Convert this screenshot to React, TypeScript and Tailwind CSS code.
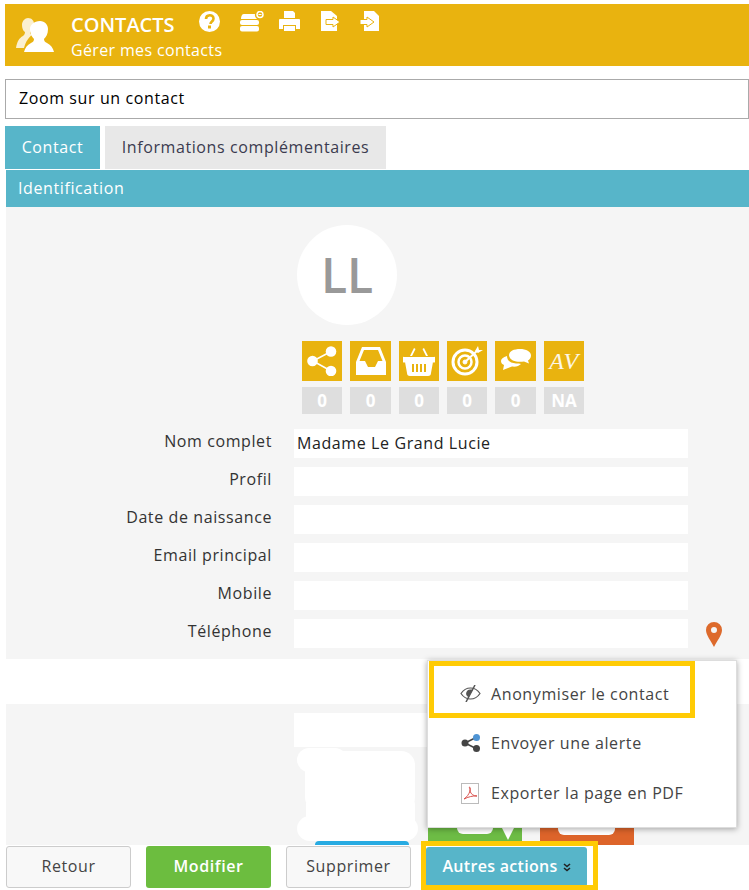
import React from "react";

const font = { fontFamily: '"Open Sans", sans-serif' };

function People() {
  return (
    <svg width="38" height="36" viewBox="0 0 38 36" fill="#fff">
      <path opacity=".8" d="M12 1c4 0 6 3 6 6 0 4-2 7-4 8 0 2 1 2 2 3-3 2-6 6-8 13H0c1-6 3-10 7-12 1-1 2-2 2-4-2-1-3-4-3-7 0-4 3-7 6-7z" />
      <path d="M24 4c5 0 8 4 8 8 0 5-2 8-4 10 0 2 1 3 3 4 4 2 6 5 7 9H8c1-4 3-7 7-9 2-1 3-2 3-4-2-2-4-5-4-10 0-4 4-8 10-8z" />
    </svg>
  );
}

function HeaderIcons() {
  return (
    <div className="flex items-start">
      <svg width="21" height="21" viewBox="0 0 21 21">
        <circle cx="10.5" cy="10.5" r="10.5" fill="#fff" />
        <path d="M7 8c0-5 7.500-5 7.500-.5 0 3-3 3-3 5.500" fill="none" stroke="#e9b30f" strokeWidth="2.600" />
        <rect x="9" y="14.500" width="3" height="3" fill="#e9b30f" />
      </svg>
      <svg className="ml-[20px]" width="24" height="21" viewBox="0 0 24 21" fill="#fff">
        <rect x="0" y="15" width="19" height="5.500" rx="2" />
        <rect x="0" y="9" width="19" height="5" rx="2" />
        <path d="M4 3h11a5 5 0 0 0 2 5H1c0-3 1-5 3-5z" />
        <circle cx="20" cy="3.500" r="3" fill="none" stroke="#fff" strokeWidth="1.500" />
        <rect x="18.500" y="3" width="3" height="1" />
      </svg>
      <svg className="ml-[15px]" width="21" height="21" viewBox="0 0 21 21" fill="#fff">
        <path d="M5 0h9l2 2v5H5z" />
        <path d="M1 8h19a1 1 0 0 1 1 1v9h-4v-4H4v4H0V9a1 1 0 0 1 1-1z" />
        <rect x="5" y="15" width="11" height="5" />
      </svg>
      <svg className="ml-[21px]" width="20" height="21" viewBox="0 0 20 21">
        <path d="M0 0h10l6 5v15H0z" fill="#fff" />
        <path d="M5 8.500h7V6l7 5-7 5v-2.500H5z" fill="#fff" stroke="#e9b30f" strokeWidth="1" />
      </svg>
      <svg className="ml-[19px]" width="20" height="21" viewBox="0 0 20 21">
        <path d="M4 0h10l5 5v15H4z" fill="#fff" />
        <path d="M0 8.500h7V6l7 5-7 5v-2.500H0z" fill="#fff" stroke="#e9b30f" strokeWidth="1" />
      </svg>
    </div>
  );
}

const badgeIcons = [
  <svg width="30" height="30" viewBox="0 0 30 30" key="a" fill="#fff">
    <circle cx="24" cy="5.500" r="5.300" /><circle cx="24" cy="25" r="5.300" /><circle cx="5.500" cy="15" r="5.300" />
    <path d="M6 15 24 5.500M6 15l18 10" stroke="#fff" strokeWidth="1.500" />
  </svg>,
  <svg width="30" height="28" viewBox="0 0 30 28" key="b" fill="#fff" fillRule="evenodd">
    <path d="M6 0h18l6 15v13H0V15zM8 3 3.500 14H9l3 6h7l3-6h4.500L22 3z" />
  </svg>,
  <svg width="32" height="30" viewBox="0 0 32 30" key="c" fill="#fff">
    <path d="M7 10l4-8 1.500 1L9 10zM25 10 21 2l-1.500 1L23 10z" />
    <path fillRule="evenodd" d="M1 11h30a1 1 0 0 1 1 2v2a1 1 0 0 1-2 1l-2 11a3 3 0 0 1-3 3H7a3 3 0 0 1-3-3L2 16a1 1 0 0 1-2-1v-2a1 1 0 0 1 1-2zM9 18v8h2v-8zM13 18v8h2v-8zM17 18v8h2v-8zM21 18v8h2v-8z" />
  </svg>,
  <svg width="32" height="30" viewBox="0 0 32 30" key="d" fill="none" stroke="#fff">
    <circle cx="14" cy="16" r="12" strokeWidth="3" />
    <circle cx="14" cy="16" r="6.500" strokeWidth="2.500" />
    <circle cx="14" cy="16" r="2" fill="#fff" strokeWidth="1" />
    <path d="M14 16 27 4" strokeWidth="2" />
    <path d="M24 5l3-5 1 4 4 0-5 3z" fill="#fff" strokeWidth="0" />
  </svg>,
  <svg width="30" height="24" viewBox="0 0 30 24" key="e" fill="#fff">
    <path d="M19 0c6 0 11 2.500 11 6.500 0 2.500-1.500 4-3 5l1 3-5-2c-6 1-14 0-15-6C8 2 13 0 19 0z" />
    <path d="M6 7c0 5 4 7 9 7.500 2 0 4 0 5 .5-2 2-5 3-9 2.500L2 21l1-5c-2-1-3-2-3-4 0-2 2-4 6-5z" />
  </svg>,
  <span key="f" className="text-[24px] italic text-white/90 leading-none" style={{ fontFamily: '"Liberation Serif", serif' }}>AV</span>,
];

const counts = ["0", "0", "0", "0", "0", "NA"];
const rows = [
  ["Nom complet", "Madame Le Grand Lucie"],
  ["Profil", ""],
  ["Date de naissance", ""],
  ["Email principal", ""],
  ["Mobile", ""],
  ["Téléphone", ""],
];

function Badges() {
  const widths = ["w-10", "w-[41px]", "w-10", "w-10", "w-[41px]", "w-10"];
  return (
    <div className="flex gap-2 mt-4 ml-[296px]">
      {badgeIcons.map((ic, i) => (
        <div key={i} className={`${widths[i]} flex flex-col gap-[6px]`}>
          <div className="h-10 bg-[#e9b30f] flex items-center justify-center">{ic}</div>
          <div className="h-[27px] bg-[#dedede] text-white font-bold text-[17px] tracking-normal flex items-center justify-center">{counts[i]}</div>
        </div>
      ))}
    </div>
  );
}

function Row({ label, value, pin }: { label: string; value: string; pin?: boolean }) {
  return (
    <div className="flex items-start h-[38px]">
      <div className="w-[266px] text-right text-[#333] leading-[24px]">{label}</div>
      <div className="ml-[22px] w-[394px] h-[29px] bg-white pl-[3px] text-[#222] leading-[29px]">{value}</div>
      {pin && (
        <svg className="ml-[18px] mt-[3px]" width="16" height="25" viewBox="0 0 16 25">
          <path fillRule="evenodd" fill="#dd6a2c" d="M8 0a8 8 0 0 1 8 8c0 5-5 11-8 17C5 19 0 13 0 8a8 8 0 0 1 8-8zm0 5a3 3 0 1 0 0 6 3 3 0 0 0 0-6z" />
        </svg>
      )}
    </div>
  );
}

function Menu() {
  return (
    <div className="absolute left-[427px] top-[660px] w-[310px] h-[168px] bg-white border border-[#ddd] shadow-[0_1px_6px_rgba(0,0,0,0.35)] text-[#444]">
      <div className="flex items-center h-[49px] mt-[8px] pl-[32px] gap-[10px]">
        <svg width="21" height="17" viewBox="0 0 21 17" fill="none" stroke="#555" strokeWidth="1.200">
          <path d="M1 8.500C4 4 7 3 10.500 3S17 4 20 8.500C17 13 14 14 10.500 14S4 13 1 8.500z" />
          <path d="M10.500 5a3.500 3.500 0 0 0-2 6.500L12 5.300z" fill="#555" />
          <path d="M15 0 6 17" strokeWidth="1.500" />
        </svg>
        <span>Anonymiser le contact</span>
      </div>
      <div className="flex items-center h-[50px] pl-[33px] gap-[10px]">
        <svg width="20" height="18" viewBox="0 0 20 18">
          <path d="M4 9 16 3M4 9l12 6" stroke="#444" strokeWidth="1.500" />
          <circle cx="4" cy="9" r="3.500" fill="#444" />
          <circle cx="15.500" cy="3.500" r="3.500" fill="#4f94d4" />
          <circle cx="15.500" cy="14.500" r="3.500" fill="#444" />
        </svg>
        <span>Envoyer une alerte</span>
      </div>
      <div className="flex items-center h-[50px] pl-[33px] gap-[11px]">
        <svg width="19" height="21" viewBox="0 0 19 21" fill="none">
          <rect x=".5" y=".5" width="17" height="20" fill="#fff" stroke="#bbb" />
          <path d="M3 16c3-2 5-5 6-8 0-2-1-4-.5-4S10 6 9 8c1 3 3 5 7 5-4-.5-9 1-13 3z" stroke="#d9534f" strokeWidth="1" />
        </svg>
        <span>Exporter la page en PDF</span>
      </div>
    </div>
  );
}

export default function App() {
  return (
    <div className="relative w-[749px] h-[890px] overflow-hidden bg-white text-[16px] tracking-[0.6px]" style={font}>
      <div className="pt-1 pl-[5px]">
        <header className="h-[62px] bg-[#e9b30f] flex text-white">
          <div className="pl-[11px] pt-[13px] w-[66px]"><People /></div>
          <div className="pt-[7px]">
            <div className="flex">
              <div className="text-[20px] leading-[27px] w-[128px] font-semibold tracking-normal">CONTACTS</div>
              <HeaderIcons />
            </div>
            <div className="text-[16px] leading-[20px] mt-[2px] tracking-[0.35px]">Gérer mes contacts</div>
          </div>
        </header>
        <div className="mt-[13px] h-10 border border-[#aaa] pl-[13px] leading-[36px] text-black">Zoom sur un contact</div>
        <div className="mt-[7px] flex gap-[5px] h-[43px] leading-[42px]">
          <div className="w-[95px] bg-[#57b5c9] text-white text-center">Contact</div>
          <div className="w-[281px] bg-[#e8e8e8] text-[#3b3b4f] text-center">Informations complémentaires</div>
        </div>
      </div>
      <div className="ml-[6px] mt-[1px]">
        <div className="h-[37px] bg-[#57b5c9] text-white leading-[36px] pl-[12px]">Identification</div>
        <div className="h-[452px] bg-[#f5f5f5] pt-[18px]">
          <div className="ml-[291px] w-[100px] h-[100px] rounded-full bg-white flex items-center justify-center text-[#999] text-[48px] font-semibold tracking-normal">LL</div>
          <Badges />
          <div className="mt-[15px]">
            {rows.map(([l, v], i) => (
              <Row key={l} label={l} value={v} pin={i === 5} />
            ))}
          </div>
        </div>
        <div className="h-[45px]" />
        <div className="h-[141px] bg-[#f5f5f5] pt-[9px] pl-[288px] overflow-hidden relative">
          <div className="w-[140px] h-[34px] bg-white" />
          <div className="absolute left-[309px] top-[137px] w-[94px] h-1 bg-[#28abe2] rounded-t-md" />
          <div className="absolute left-[291px] top-[44px] w-[50px] h-[24px] rounded-full bg-white" />
          <div className="absolute left-[299px] top-[47px] w-[110px] h-[60px] rounded-[14px] bg-white" />
          <div className="absolute left-[300px] top-[90px] w-[109px] h-[40px] rounded-[10px] bg-white" />
          <div className="absolute left-[291px] top-[112px] w-[121px] h-[25px] rounded-full bg-white" />
          <div className="absolute left-[422px] top-[110px] w-[94px] h-[31px] bg-[#6dbc45]">
            <div className="ml-[29px] w-[36px] h-[20px] bg-white rounded-b-md" />
          </div>
          <div className="absolute left-[489px] top-[110px] w-[26px] h-[26px] bg-white [clip-path:polygon(0_0,100%_0,50%_100%)]" />
          <div className="absolute left-[534px] top-[110px] w-[94px] h-[31px] bg-[#dd642a]">
            <div className="ml-[18px] w-[57px] h-[21px] bg-white rounded-b-md" />
          </div>
        </div>
        <div className="mt-[1px] flex gap-[15px]">
          <button className="w-[125px] h-[42px] pb-[2px] rounded-[3px] border border-[#ccc] bg-[#f8f8f8] text-[#444]">Retour</button>
          <button className="w-[125px] h-[42px] pb-[2px] rounded-[3px] bg-[#6cbd3f] text-white font-semibold">Modifier</button>
          <button className="w-[125px] h-[42px] pb-[2px] rounded-[3px] border border-[#ccc] bg-[#f8f8f8] text-[#444]">Supprimer</button>
          <button className="mt-[1px] w-[161px] h-10 pb-[2px] rounded-[3px] bg-[#57b5c9] text-white font-semibold tracking-[0.3px] flex items-center justify-center gap-[5px]">
            Autres actions
            <svg className="mt-[3px]" width="8" height="9" viewBox="0 0 8 9" fill="none" stroke="#222" strokeWidth="1.600"><path d="M1 1l3 2.500L7 1M1 5l3 2.500L7 5" /></svg>
          </button>
        </div>
      </div>
      <Menu />
      <div className="absolute left-[429px] top-[661px] w-[266px] h-[57px] border-[5px] border-[#ffcb05]" />
      <div className="absolute left-[421px] top-[841px] w-[177px] h-[49px] border-[5px] border-[#ffcb05]" />
    </div>
  );
}
